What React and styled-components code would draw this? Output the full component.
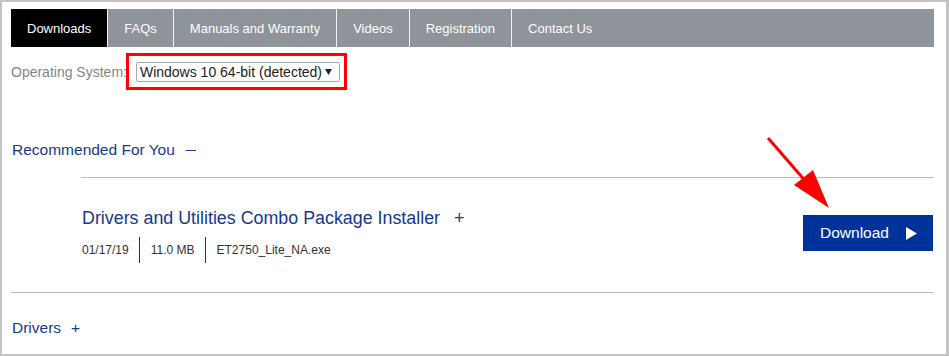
import React from "react";
import styled, { createGlobalStyle } from "styled-components";

const Global = createGlobalStyle`
  html, body { margin: 0; padding: 0; background: #fff; }
  body { font-family: "Liberation Sans", Arial, sans-serif; }
`;

const Frame = styled.div`
  position: relative;
  box-sizing: border-box;
  width: 949px;
  height: 356px;
  overflow: hidden;
  border-style: solid;
  border-color: #c3c3c3;
  border-width: 2px 3px 2px 2px;
  padding: 7px 12px 0 9px;
  background: #fff;
`;

const Nav = styled.nav`
  display: flex;
  height: 38px;
  background: #8f939a;
`;

const Tab = styled.div`
  display: flex;
  align-items: center;
  padding: 0 16px;
  font-size: 13px;
  color: #fff;
  background: ${(p) => (p.$active ? "#000" : "#8f939a")};
  border-right: ${(p) => (p.$last ? "none" : "1px solid #f2f2f2")};
`;

const OsRow = styled.div`
  display: flex;
  align-items: center;
  gap: 9px;
  margin-top: 15px;
  height: 20px;
`;

const OsLabel = styled.span`
  font-size: 14px;
  color: #858585;
  white-space: nowrap;
`;

const SelectWrap = styled.div`
  position: relative;
`;

const SelectBox = styled.div`
  box-sizing: border-box;
  display: flex;
  align-items: center;
  justify-content: space-between;
  width: 204px;
  height: 20px;
  padding: 0 7px 0 3px;
  border: 1px solid #a9a9a9;
  border-radius: 2px;
  font-size: 14px;
  color: #222;
  background: #fff;
  white-space: nowrap;
`;

const Caret = styled.svg`
  flex: none;
  margin-left: 3px;
`;

const Highlight = styled.div`
  position: absolute;
  left: -10px;
  top: -9px;
  right: -7px;
  bottom: -8px;
  border: 3px solid #f00;
  pointer-events: none;
`;

const SectionHeader = styled.div`
  display: flex;
  align-items: center;
  height: 20px;
  margin-top: ${(p) => p.$mt}px;
  padding-left: 1px;
  font-size: 15.5px;
  color: #14398f;
`;

const Sign = styled.span`
  margin-left: ${(p) => p.$gap || 10}px;
  font-size: ${(p) => p.$size || 15.5}px;
  color: #14398f;
`;

const Minus = styled.span`
  display: inline-block;
  width: 10px;
  height: 1px;
  margin-left: 11px;
  margin-top: 1px;
  background: #14398f;
`;

const Item = styled.div`
  display: flex;
  justify-content: space-between;
  margin: 17px 0 0 70px;
  padding: 29px 1px 29px 1px;
  border-top: 1px solid #bcbcbc;
`;

const ItemBody = styled.div`
  display: flex;
  flex-direction: column;
`;

const ItemTitle = styled.div`
  display: flex;
  align-items: center;
  height: 22px;
  font-size: 17.85px;
  color: #14398f;
`;

const Meta = styled.div`
  display: flex;
  align-items: center;
  margin-top: 8px;
  height: 26px;
`;

const MetaItem = styled.span`
  display: flex;
  align-items: center;
  height: 26px;
  padding: 0 10px 0 ${(p) => (p.$first ? 0 : 11)}px;
  border-left: ${(p) => (p.$first ? "none" : "1px solid #333")};
  font-size: 12px;
  color: #333;
`;

const DownloadButton = styled.div`
  box-sizing: border-box;
  display: flex;
  align-items: center;
  gap: 17px;
  align-self: flex-start;
  margin-top: 8px;
  width: 130px;
  height: 36px;
  padding-left: 17px;
  background: #003399;
  color: #fff;
  font-size: 15.5px;
`;

const Section = styled.div`
  border-top: 1px solid #bcbcbc;
`;

const ArrowSvg = styled.svg`
  position: absolute;
  left: 0;
  top: 0;
  pointer-events: none;
`;

export default function App() {
  const tabs = ["Downloads", "FAQs", "Manuals and Warranty", "Videos", "Registration", "Contact Us"];
  return (
    <>
      <Global />
      <Frame>
        <Nav>
          {tabs.map((t, i) => (
            <Tab key={t} $active={i === 0} $last={i === tabs.length - 1}>
              {t}
            </Tab>
          ))}
        </Nav>
        <OsRow>
          <OsLabel>Operating System:</OsLabel>
          <SelectWrap>
            <SelectBox>
              <span>Windows 10 64-bit (detected)</span>
              <Caret width="7" height="6" viewBox="0 0 7 6">
                <polygon points="0,0 7,0 3.5,6" fill="#222" />
              </Caret>
            </SelectBox>
            <Highlight />
          </SelectWrap>
        </OsRow>
        <SectionHeader $mt={58}>
          Recommended For You
          <Minus />
        </SectionHeader>
        <Item>
          <ItemBody>
            <ItemTitle>
              Drivers and Utilities Combo Package Installer
              <Sign $gap={14} $size={18}>+</Sign>
            </ItemTitle>
            <Meta>
              <MetaItem $first>01/17/19</MetaItem>
              <MetaItem>11.0 MB</MetaItem>
              <MetaItem>ET2750_Lite_NA.exe</MetaItem>
            </Meta>
          </ItemBody>
          <DownloadButton>
            Download
            <svg width="11" height="13" viewBox="0 0 11 13">
              <polygon points="0,0 11,6.5 0,13" fill="#fff" />
            </svg>
          </DownloadButton>
        </Item>
        <Section>
          <SectionHeader $mt={25}>
            Drivers
            <Sign $gap={10}>+</Sign>
          </SectionHeader>
        </Section>
        <ArrowSvg width="949" height="356" viewBox="0 0 949 356">
          <line x1="766" y1="136" x2="806" y2="182" stroke="#f00" strokeWidth="3" />
          <polygon points="827,206 792,183 811,168" fill="#f00" />
        </ArrowSvg>
      </Frame>
    </>
  );
}
